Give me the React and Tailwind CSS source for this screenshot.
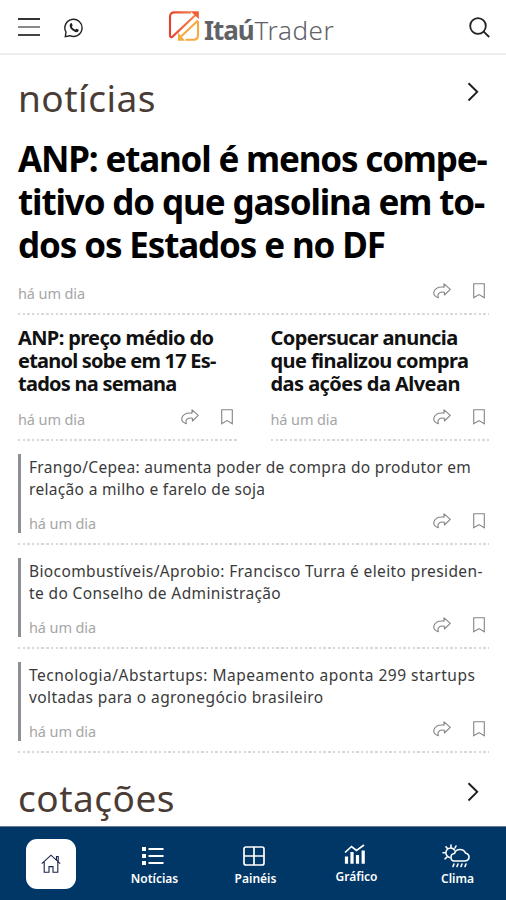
const regularNews = [
  {
    lines: ['Frango/Cepea: aumenta poder de compra do produtor em', 'relação a milho e farelo de soja'],
    tracking: ['tracking-[0.32px]', 'tracking-[0.32px]'],
  },
  {
    lines: ['Biocombustíveis/Aprobio: Francisco Turra é eleito presiden-', 'te do Conselho de Administração'],
    tracking: ['tracking-[0.38px]', 'tracking-[0.38px]'],
  },
  {
    lines: ['Tecnologia/Abstartups: Mapeamento aponta 299 startups', 'voltadas para o agronegócio brasileiro'],
    tracking: ['tracking-[0.5px]', 'tracking-[0.4px]'],
  },
];

const Divider = () => (
  <div className="h-[2px] bg-[repeating-linear-gradient(90deg,#d8d8d8_0px,#d8d8d8_2.4px,transparent_2.4px,transparent_4.7px)]" />
);

const ShareIcon = () => (
  <svg className="w-[18px] h-4" viewBox="0 0 18 16" fill="none" stroke="#858585" strokeWidth="1.1" strokeLinejoin="round">
    <path d="M11 0.8 L17.3 6.3 L11.4 12 V9.2 C8.6 8.4 6 9.6 5.2 11.2 C4.8 12.4 5 13.4 5.4 14.8 C2.2 13.6 0.4 11.6 0.8 9.2 C1.6 5.8 5.6 3.7 11 4.1 Z" />
  </svg>
);

const BookmarkIcon = () => (
  <svg className="w-3 h-4" viewBox="0 0 12 16" fill="none" stroke="#858585" strokeWidth="1.1">
    <path d="M0.7 0.8 H11.3 V14.8 L6 11.6 L0.7 14.8 Z" />
  </svg>
);

const Meta = () => (
  <div className="flex h-5 items-center">
    <span className="text-[14.5px] leading-5 tracking-[-0.1px] text-[#a6a6a6]">há um dia</span>
    <div className="ml-auto mr-1 -mt-[5px] flex gap-[22px]">
      <ShareIcon />
      <BookmarkIcon />
    </div>
  </div>
);

const SectionTitle = ({ children, className }) => (
  <div className="flex h-[50px] items-start justify-between">
    <h2 className={`pt-px text-[37px] leading-[50px] font-normal text-[#4a3c35] ${className}`}>{children}</h2>
    <svg className="mt-[10px] mr-[10px] w-3 h-5" viewBox="0 0 12 20" fill="none" stroke="#1c1c1c" strokeWidth="1.9">
      <path d="M1.5 1.2 L10.2 9.8 L1.5 18.5" />
    </svg>
  </div>
);

const Logo = () => (
  <div className="flex items-center">
    <svg className="-mt-[2px] w-8 h-8" viewBox="0 0 32 32" fill="none" strokeWidth="2.1">
      <defs>
        <linearGradient id="red" x1="0" y1="0" x2="1" y2="0">
          <stop offset="0" stopColor="#e6402c" />
          <stop offset="1" stopColor="#f58a4a" />
        </linearGradient>
      </defs>
      <path stroke="url(#red)" d="M23 2.4 H6.5 Q2 2.4 2 7 V25 Q2 28.6 4.6 26.6 L27.5 5" />
      <path fill="#ee6239" d="M22.5 1.2 H30.8 V9 Z" />
      <path stroke="#f7a83e" d="M30 11 V25 Q30 29.8 25.5 29.8 H17.5 M12.5 27 L30 10.5" />
      <path fill="#f7a83e" d="M10 22.6 L17 30.8 H10 Z" />
    </svg>
    <div className="ml-[4px] mt-[6px] text-[26px] leading-8 whitespace-nowrap text-[#606266]">
      <span className="font-bold tracking-[-1.1px]">Itaú</span>
      <span className="ml-[1px] font-light tracking-[0.6px]">Trader</span>
    </div>
  </div>
);

const NavItem = ({ label, children, className = '' }) => (
  <div className={`flex w-[101px] shrink-0 flex-col items-center text-white ${className}`}>
    <div className="mr-[3px] flex h-6 items-center">{children}</div>
    <span className="mt-[3px] text-[12px] leading-4 font-semibold">{label}</span>
  </div>
);

const App = () => {
  return (
    <div className="flex h-[900px] w-[506px] flex-col overflow-hidden bg-white font-['Noto_Sans',sans-serif]">
      {/* Header */}
      <header className="flex h-[55px] shrink-0 items-center border-b-2 border-[#eeeeee] pl-[18px] pr-4">
        <div className="flex w-[22px] flex-col gap-[6px]">
          <div className="h-[2px] bg-[#333]" />
          <div className="h-[2px] bg-[#8a8a8a]" />
          <div className="h-[2px] bg-[#444]" />
        </div>
        <svg className="ml-6 mt-[3px] w-5 h-5" viewBox="0 0 20 20" fill="none" stroke="#222" strokeWidth="1.4">
          <path d="M1.3 18.7 L2 14.2 A8.6 8.6 0 1 1 5.8 17.7 Z" />
          <path fill="#222" stroke="none" d="M6.7 5.2 C7.3 4.9 7.7 5 8 5.7 L8.6 7.2 C8.8 7.8 7.8 8.4 7.9 8.8 C8.6 10.2 9.7 11.1 11 11.6 C11.5 11.7 12 10.6 12.5 10.7 L14.4 11.6 C15 12 14.6 13.6 13.6 14 C11.8 14.8 9.2 13.3 7.6 11.6 C6 9.8 4.8 7.2 6.7 5.2 Z" />
        </svg>
        <div className="ml-[84px]">
          <Logo />
        </div>
        <svg className="ml-auto mt-[2px] w-[21px] h-[21px]" viewBox="0 0 21 21" fill="none" stroke="#222" strokeWidth="1.8">
          <circle cx="9" cy="9" r="7.8" />
          <path d="M14.4 14.4 L20.2 20" />
        </svg>
      </header>

      {/* News */}
      <main className="min-h-0 flex-1 overflow-hidden pl-[18px] pr-[17px] pt-[17px]">
        <SectionTitle className="tracking-[0.5px]">notícias</SectionTitle>

        <h1 className="mt-[15px] text-[35px] leading-[43px] font-bold whitespace-nowrap text-black">
          <span className="block tracking-[-1.18px]">ANP: etanol é menos compe-</span>
          <span className="block tracking-[-1.13px]">titivo do que gasolina em to-</span>
          <span className="block tracking-[-1.13px]">dos os Estados e no DF</span>
        </h1>
        <div className="mt-[17px] mb-[10px]">
          <Meta />
        </div>
        <Divider />

        <div className="flex gap-[34px]">
          <article className="flex-1">
            <h3 className="mt-[11px] text-[20px] leading-[23px] font-bold whitespace-nowrap text-[#111]">
              <span className="block tracking-[-0.63px]">ANP: preço médio do</span>
              <span className="block tracking-[-0.78px]">etanol sobe em 17 Es-</span>
              <span className="block tracking-[-0.75px]">tados na semana</span>
            </h3>
            <div className="mt-[14px] mb-[10px]">
              <Meta />
            </div>
            <Divider />
          </article>
          <article className="flex-1">
            <h3 className="mt-[11px] text-[20px] leading-[23px] font-bold whitespace-nowrap text-[#111]">
              <span className="block tracking-[-0.58px]">Copersucar anuncia</span>
              <span className="block tracking-[-0.58px]">que finalizou compra</span>
              <span className="block tracking-[-0.55px]">das ações da Alvean</span>
            </h3>
            <div className="mt-[14px] mb-[10px]">
              <Meta />
            </div>
            <Divider />
          </article>
        </div>

        {regularNews.map((item) => (
          <div key={item.lines[0]}>
            <article className="mt-[13px] mb-[10px] h-[79px] border-l-[3px] border-[#8e8e96] pl-2">
              <p className="pt-[2px] text-[15.5px] leading-[22px] whitespace-nowrap text-[#3a3a3a]">
                <span className={`block ${item.tracking[0]}`}>{item.lines[0]}</span>
                <span className={`block ${item.tracking[1]}`}>{item.lines[1]}</span>
              </p>
              <div className="mt-[13px]">
                <Meta />
              </div>
            </article>
            <Divider />
          </div>
        ))}

        <div className="mt-[19px]">
          <SectionTitle className="tracking-[0.5px]">cotações</SectionTitle>
        </div>
      </main>

      {/* Bottom navigation */}
      <nav className="flex h-[74px] shrink-0 items-start border-t border-[#6e7896] bg-[#003766]">
        <div className="flex w-[104px] shrink-0 pl-[26px] pt-3">
          <div className="flex h-[50px] w-[50px] items-center justify-center rounded-[11px] bg-white">
            <svg className="w-5 h-5" viewBox="0 0 20 20" fill="none" stroke="#1b2350" strokeWidth="1.1">
              <path d="M0.8 9.6 L10 1.2 L19.2 9.6 M15.5 6 V2.5 H17.2 V7.6 M3.2 8 V18.2 H8 V12.6 H12 V18.2 H16.8 V8" />
            </svg>
          </div>
        </div>
        <NavItem label="Notícias" className="pt-[17px]">
          <svg className="w-[22px] h-5" viewBox="0 0 22 20" fill="white">
            <path d="M0 1h4v4H0z M0 8h4v4H0z M0 15h4v4H0z M6.5 2h15v2h-15z M6.5 9h15v2h-15z M6.5 16h15v2h-15z" />
          </svg>
        </NavItem>
        <NavItem label="Painéis" className="pt-[17px]">
          <svg className="w-[22px] h-5" viewBox="0 0 22 20" fill="none" stroke="white" strokeWidth="1.7">
            <rect x="1" y="1" width="20" height="18" rx="2" />
            <path d="M11 1 V19 M1 10 H21" />
          </svg>
        </NavItem>
        <NavItem label="Gráfico" className="pt-[15px]">
          <svg className="w-[22px] h-5" viewBox="0 0 22 20" fill="none" stroke="white" strokeWidth="1.7">
            <path d="M1 8.5 L7.5 2.5 L12.5 6.5 L20 1" />
            <path strokeWidth="3.2" d="M2.5 12.5 V19.8 M8 8 V19.8 M13.5 11 V19.8 M19.2 6.5 V19.8" />
          </svg>
        </NavItem>
        <NavItem label="Clima" className="pt-[17px]">
          <svg className="w-7 h-6" viewBox="0 0 28 24" fill="none" stroke="white" strokeWidth="1.6" strokeLinecap="round">
            <path d="M12 17 H23 Q27 16.5 27 13 Q27 9.8 23.5 9 Q22 5.5 18 5.5 Q13.5 5.5 12.5 9.5 Q9 9.8 9 13.2 Q9 16.8 12 17 Z" />
            <path d="M7.5 13.5 A4.8 4.8 0 1 1 12.5 6 M9 1 V3.2 M4 2.8 L5.4 4.6 M1 8.7 H3.4 M3 14.8 L5 13 M14 2 L13 4" />
            <path d="M12 20 L11 22.5 M16 20 L15 22.5 M20 20 L19 22.5 M24 20 L23 22.5" />
          </svg>
        </NavItem>
      </nav>
    </div>
  );
};

export default App;
